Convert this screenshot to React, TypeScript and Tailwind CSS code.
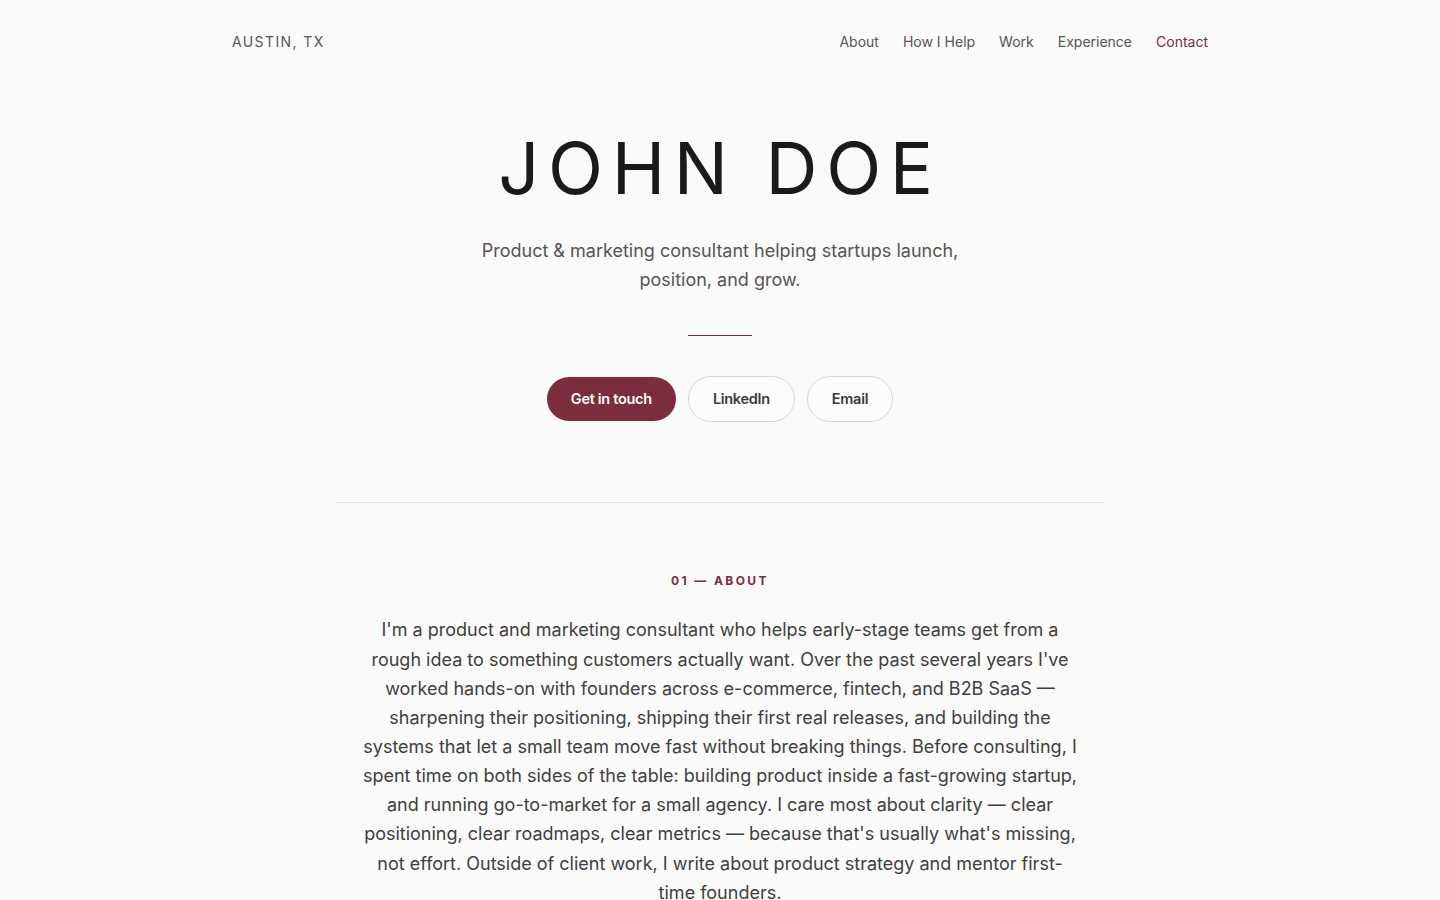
import React from "react";

const navLinks = ["About", "How I Help", "Work", "Experience"];

export default function App() {
  return (
    <div
      className="min-h-screen bg-[#fafaf9] text-[#1a1a1a]"
      style={{ fontFamily: "Inter, 'Noto Sans', sans-serif" }}
    >
      <header className="mx-auto flex w-[976px] items-center justify-between pt-[32px]">
        <div className="text-[14px] leading-5 tracking-[0.1em] text-[#555]">AUSTIN, TX</div>
        <nav className="flex items-center gap-6 text-[14px] leading-5 text-[#555]">
          {navLinks.map((l) => (
            <a key={l} href="#" className="hover:text-[#1a1a1a]">
              {l}
            </a>
          ))}
          <a href="#" className="text-[#7b2d3b]">
            Contact
          </a>
        </nav>
      </header>

      <section className="flex flex-col items-center pt-[73px] text-center">
        <h1 className="text-[72px] font-normal leading-[1.2] tracking-[0.12em] text-[#1a1a1a]">
          JOHN DOE
        </h1>
        <p className="mt-[25px] max-w-lg text-[18px] leading-[29px] text-[#555]">
          Product &amp; marketing consultant helping startups launch, position, and grow.
        </p>
        <div className="mt-[41px] h-px w-16 bg-[#7b2d3b]" />
        <div className="mt-[40px] flex items-center gap-3">
          <a
            href="#"
            className="flex h-11 items-center rounded-full bg-[#7b2d3b] px-6 pb-px text-[14.5px] font-semibold tracking-[-0.02em] text-white"
          >
            Get in touch
          </a>
          <a
            href="#"
            className="flex h-[46px] items-center rounded-full border border-[#d6d6d4] bg-white/40 px-6 pb-px text-[14.5px] font-semibold tracking-[-0.02em] text-[#3a3a3a]"
          >
            LinkedIn
          </a>
          <a
            href="#"
            className="flex h-[46px] items-center rounded-full border border-[#d6d6d4] bg-white/40 px-6 pb-px text-[14.5px] font-semibold tracking-[-0.02em] text-[#3a3a3a]"
          >
            Email
          </a>
        </div>
      </section>

      <div className="mx-auto mt-[80px] h-px w-[768px] bg-[#e4e4e2]" />

      <section className="mx-auto flex w-[768px] flex-col items-center pt-[68px] text-center">
        <div className="text-[12px] font-bold leading-5 tracking-[0.2em] text-[#7b2d3b]">
          01 — ABOUT
        </div>
        <p className="mt-[24px] max-w-[720px] text-[18px] leading-[1.62] text-[#3f3f3f]">
          I'm a product and marketing consultant who helps early-stage teams get from a rough idea
          to something customers actually want. Over the past several years I've worked hands-on
          with founders across e-commerce, fintech, and B2B SaaS — sharpening their positioning,
          shipping their first real releases, and building the systems that let a small team move
          fast without breaking things. Before consulting, I spent time on both sides of the table:
          building product inside a fast-growing startup, and running go-to-market for a small
          agency. I care most about clarity — clear positioning, clear roadmaps, clear metrics —
          because that's usually what's missing, not effort. Outside of client work, I write about
          product strategy and mentor first-time founders.
        </p>
      </section>
    </div>
  );
}
